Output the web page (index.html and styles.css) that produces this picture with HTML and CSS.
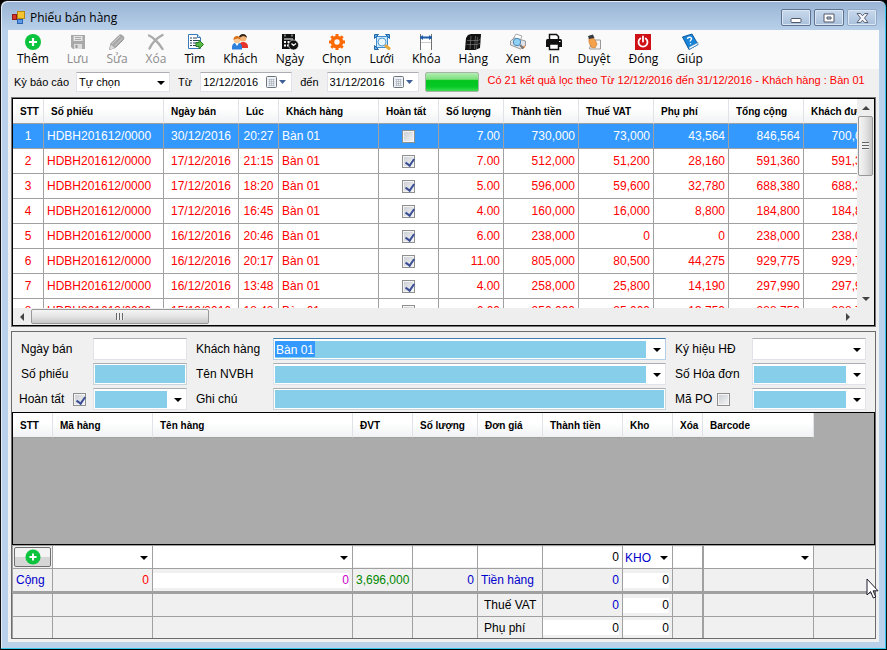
FILE: index.html
```html
<!DOCTYPE html>
<html lang="vi">
<head>
    <meta charset="UTF-8">
    <meta name="viewport" content="width=device-width, initial-scale=1.0">
    <title>Phiếu bán hàng</title>
    <link rel="stylesheet" href="styles.css">
</head>
<body>
<div class="window">
    <!-- Title bar -->
    <header class="titlebar">
        <svg class="app-icon" width="13" height="13" viewBox="0 0 13 13">
            <rect x="5.500" y="0.500" width="7" height="7" fill="#f5c431" stroke="#b8860b"/>
            <rect x="0.500" y="3.500" width="4" height="5" fill="#d9362b" stroke="#8f1d16"/>
            <rect x="5.500" y="8.500" width="5" height="4" fill="#5b9bea" stroke="#2f62ae"/>
        </svg>
        <h1>Phiếu bán hàng</h1>
        <div class="window-buttons">
            <button aria-label="Minimize"><svg width="12" height="12" viewBox="0 0 12 12"><rect x="1" y="6.500" width="10" height="4" rx="1" fill="#fff" stroke="#535666"/></svg></button>
            <button aria-label="Maximize"><svg width="12" height="12" viewBox="0 0 12 12"><path d="M1 2h10v8H1zM4 5v2h4V5z" fill="#fff" fill-rule="evenodd" stroke="#535666"/></svg></button>
            <button class="close" aria-label="Close"><svg width="13" height="12" viewBox="0 0 13 12"><path d="M1 1.500h3.500l2 2.300 2-2.300H12L8.500 6l3.500 4.500H8.500l-2-2.300-2 2.300H1L4.500 6z" fill="#f3f6fa" stroke="#5c6478"/></svg></button>
        </div>
    </header>

    <main class="content">
        <!-- Toolbar -->
        <nav class="toolbar">
            <button>
                <svg viewBox="0 0 18 18"><circle cx="9" cy="9" r="8" fill="#0bc33c"/><path d="M9 5v8M5 9h8" stroke="#fff" stroke-width="2.200"/></svg>
                Thêm
            </button>
            <button disabled>
                <svg viewBox="0 0 18 18"><path d="M2 2h14v14H4l-2-2z" fill="#a9a9a9"/><path d="M4.500 3h9v5h-9z" fill="#e4e4e4"/><path d="M5 11h8v5H5z" fill="#ddd"/><path d="M6 4.500h6M6 6.500h6" stroke="#aaa"/><path d="M6.500 12h2v3h-2z" fill="#999"/></svg>
                Lưu
            </button>
            <button disabled>
                <svg viewBox="0 0 18 18"><path d="M1.500 16.500l1.500-6L11 2.500c2-2 6 1.500 4.500 4L7.500 14.500z" fill="#a8a8a8" stroke="#999"/><path d="M4 11l8-8M6.500 13l8-8" stroke="#ccc"/><path d="M1.500 16.500l1.500-5 3.500 3.500z" fill="#ddd"/></svg>
                Sửa
            </button>
            <button disabled>
                <svg viewBox="0 0 18 18"><path d="M2 2.500C6 4 12 10 15.500 16M15.500 2C10 5 5 10 2.500 15.500" fill="none" stroke="#aaa" stroke-width="2.400" stroke-linecap="round"/></svg>
                Xóa
            </button>
            <button>
                <svg viewBox="0 0 18 18"><path d="M2.500 1.500h9l3 3v11h-12z" fill="#fff" stroke="#3a7ab8"/><path d="M11.500 1.500v3h3" fill="#d6e8f7" stroke="#3a7ab8"/><path d="M4 5h2m1 0h4M4 7.500h2m1 0h6M4 10h2m1 0h3M4 12.500h2m1 0h3" stroke="#29425e"/><path d="M10 9.500h3V7l4.500 4.500L13 16v-2.500h-3z" fill="#58b947" stroke="#277a24"/></svg>
                Tìm
            </button>
            <button>
                <svg viewBox="0 0 18 18"><path d="M8 15c0-4 1-6 4-6s5.500 2 5 6z" fill="#e5352b"/><circle cx="12" cy="5" r="3.500" fill="#f4b577"/><path d="M8 5c-.5-5 8-5.500 8 0-1-1-2-2-4-2z" fill="#33231a"/><path d="M1 16.500c-.5-5 1.500-7 5-7s5.500 2 5 7z" fill="#2c7fda"/><path d="M4 10l2 3 2-3z" fill="#fff"/><circle cx="6" cy="7" r="3.300" fill="#f9c791"/><path d="M2.500 7c-.5-5 7-5.500 7 0C8 5 5 5 2.500 7z" fill="#d8701a"/></svg>
                Khách
            </button>
            <button>
                <svg viewBox="0 0 18 18"><path d="M1 1h13v15H1z" fill="#111"/><path d="M3 5.500h9v1H3zM3 8h2v2H3zM6.500 8h2v2h-2zM3 11.500h2v2H3zM6 11.500h1.500v2H6z" fill="#fff"/><path d="M4 1.500v2M11 1.500v2" stroke="#ddd"/><circle cx="12.500" cy="12" r="5" fill="#111" stroke="#fff" stroke-width=".6"/><path d="M10.500 10.500l2 2 2.500-2" fill="none" stroke="#fff" stroke-width="1.200"/></svg>
                Ngày
            </button>
            <button>
                <svg viewBox="0 0 18 18"><circle cx="9" cy="9" r="4.500" fill="none" stroke="#fb6a05" stroke-width="3.600"/><path d="M9 1v3M9 14v3M1 9h3M14 9h3M3.300 3.300l2 2M12.700 12.700l2 2M14.700 3.300l-2 2M5.300 12.700l-2 2" stroke="#fb6a05" stroke-width="3"/></svg>
                Chọn
            </button>
            <button>
                <svg viewBox="0 0 18 18"><rect x="3.500" y="3.500" width="11" height="11" fill="#cfe8fb" stroke="#3d8bcf"/><path d="M1.500 1.500h4l-4 4zM16.500 1.500h-4l4 4zM1.500 16.500v-4l4 4z" fill="#5ba9e6" stroke="#2868a8"/><circle cx="9" cy="9" r="4" fill="#e7f6ff" stroke="#549ad2"/><path d="M13 13l3 2.500" stroke="#e7a83a" stroke-width="3" stroke-linecap="round"/></svg>
                Lưới
            </button>
            <button>
                <svg viewBox="0 0 18 18"><path d="M4 5h10v12H4z" fill="#fff"/><path d="M3.500 1v16M14.500 1v16" stroke="#707070"/><path d="M3 4.500h12" stroke="#1d5ba8" stroke-width="2"/><path d="M3 4.500l3-2.500v5zM15 4.500L12 2v5z" fill="#1d5ba8"/><path d="M4 9.500h10" stroke="#ccc"/></svg>
                Khóa
            </button>
            <button>
                <svg viewBox="0 0 18 18"><path d="M4 2l3-1h10l-1 14-5 2H1L2 5z" fill="#111"/><path d="M7 3L6 16M11.500 3l-1 13M3 7.500h11l3-1.500M2.500 11.500h11l3-1.500M13.500 4l-1 12" stroke="#888" fill="none" stroke-width=".6"/></svg>
                Hàng
            </button>
            <button>
                <svg viewBox="0 0 18 18"><path d="M4 6l3-5 6 2-2 5z" fill="#fff" stroke="#aaa"/><path d="M1.500 8l4-3 11 3v5l-5 3-10-4z" fill="#dfe3e8" stroke="#999"/><path d="M12 14l4-1.500v2L13 16z" fill="#ef9450"/><circle cx="8" cy="9" r="3.700" fill="#8fd0f5" stroke="#4987b7"/><path d="M11 12l3.500 3.500" stroke="#777" stroke-width="2"/></svg>
                Xem
            </button>
            <button>
                <svg viewBox="0 0 18 18"><path d="M4.500 7V1.500h7l2 2V7" fill="#fff" stroke="#111" stroke-width="1.500"/><path d="M1 7.500Q1 6 2.500 6h13Q17 6 17 7.500V14H1z" fill="#111"/><path d="M4.500 11h9v5.500h-9z" fill="#fff" stroke="#111" stroke-width="1.500"/><path d="M14 8.500h1.500" stroke="#fff"/></svg>
                In
            </button>
            <button>
                <svg viewBox="0 0 18 18"><path d="M7 7h8.500v9H4.500z" fill="#f4f4f4" stroke="#999"/><path d="M4 5c2-2 4-1 6 2l2 4-2 4-4-1-2-5z" fill="#f4a24c" stroke="#cf772a" stroke-width=".7"/><path d="M3 3l5-1.500L9.500 5 4 6z" fill="#353b40"/></svg>
                Duyệt
            </button>
            <button>
                <svg viewBox="0 0 18 18"><rect x="1" y="1" width="16" height="16" fill="#cf1016"/><path d="M6.300 5.500a4.500 4.500 0 1 0 5.400 0M9 3.500v5" fill="none" stroke="#fff" stroke-width="1.800" stroke-linecap="round"/></svg>
                Đóng
            </button>
            <button>
                <svg viewBox="0 0 18 18"><path d="M1.500 4L11 1l6 10.500L8 16.500z" fill="#1784d8" stroke="#0f5ba0"/><path d="M8 16.500l9-5v-2L8 14z" fill="#fff" stroke="#2a75b5" stroke-width=".6"/><path d="M6.500 6c0-2.500 4.500-2.300 4 0-.2 1.200-1.500 1-1.300 2.500M9.500 10.300v1" fill="none" stroke="#fff" stroke-width="1.400"/></svg>
                Giúp
            </button>
        </nav>

        <!-- Report period filter -->
        <div class="filter">
            <label for="period">Kỳ báo cáo</label>
            <span class="combo period"><select id="period"><option>Tự chọn</option></select></span>
            <label class="from" for="date-from">Từ</label>
            <span class="date">
                <input type="text" id="date-from" value="12/12/2016">
                <svg width="22" height="13" viewBox="0 0 22 13"><rect x="0.500" y="0.500" width="10" height="11" rx="1" fill="#eef1f5" stroke="#6d747d"/><path d="M2.500 3.500h6M2.500 5.500h6M2.500 7.500h6M2.500 9.500h6M3.500 3v7M5.500 3v7M7.500 3v7" stroke="#a3abb5" stroke-width=".6"/><path d="M13 4h7l-3.500 4z" fill="#3f5f96"/></svg>
            </span>
            <label class="to" for="date-to">đến</label>
            <span class="date">
                <input type="text" id="date-to" value="31/12/2016">
                <svg width="22" height="13" viewBox="0 0 22 13"><rect x="0.500" y="0.500" width="10" height="11" rx="1" fill="#eef1f5" stroke="#6d747d"/><path d="M2.500 3.500h6M2.500 5.500h6M2.500 7.500h6M2.500 9.500h6M3.500 3v7M5.500 3v7M7.500 3v7" stroke="#a3abb5" stroke-width=".6"/><path d="M13 4h7l-3.500 4z" fill="#3f5f96"/></svg>
            </span>
            <div class="progress" role="progressbar" aria-valuenow="100"></div>
            <p class="message">Có 21 kết quả lọc theo Từ 12/12/2016 đến 31/12/2016 - Khách hàng : Bàn 01</p>
        </div>

        <!-- Invoice list -->
        <section class="list">
            <div class="list-view">
                <table class="grid invoices">
                    <colgroup>
                        <col class="w31"><col class="w120"><col class="w75"><col class="w40"><col class="w100"><col class="w60"><col class="w65"><col class="w75"><col class="w75"><col class="w75"><col class="w75"><col class="w75">
                    </colgroup>
                    <thead>
                        <tr><th>STT</th><th>Số phiếu</th><th>Ngày bán</th><th>Lúc</th><th>Khách hàng</th><th>Hoàn tất</th><th>Số lượng</th><th>Thành tiền</th><th>Thuế VAT</th><th>Phụ phí</th><th>Tổng cộng</th><th>Khách đưa</th></tr>
                    </thead>
                    <tbody>
                        <tr class="selected"><td>1</td><td>HDBH201612/0000</td><td>30/12/2016</td><td>20:27</td><td>Bàn 01</td><td><input type="checkbox" aria-label="Hoàn tất"></td><td>7.00</td><td>730,000</td><td>73,000</td><td>43,564</td><td>846,564</td><td>700,000</td></tr>
                        <tr><td>2</td><td>HDBH201612/0000</td><td>17/12/2016</td><td>21:15</td><td>Bàn 01</td><td><input type="checkbox" aria-label="Hoàn tất" checked></td><td>7.00</td><td>512,000</td><td>51,200</td><td>28,160</td><td>591,360</td><td>591,360</td></tr>
                        <tr><td>3</td><td>HDBH201612/0000</td><td>17/12/2016</td><td>18:20</td><td>Bàn 01</td><td><input type="checkbox" aria-label="Hoàn tất" checked></td><td>5.00</td><td>596,000</td><td>59,600</td><td>32,780</td><td>688,380</td><td>688,380</td></tr>
                        <tr><td>4</td><td>HDBH201612/0000</td><td>17/12/2016</td><td>16:45</td><td>Bàn 01</td><td><input type="checkbox" aria-label="Hoàn tất" checked></td><td>4.00</td><td>160,000</td><td>16,000</td><td>8,800</td><td>184,800</td><td>184,800</td></tr>
                        <tr><td>5</td><td>HDBH201612/0000</td><td>16/12/2016</td><td>20:46</td><td>Bàn 01</td><td><input type="checkbox" aria-label="Hoàn tất" checked></td><td>6.00</td><td>238,000</td><td>0</td><td>0</td><td>238,000</td><td>238,000</td></tr>
                        <tr><td>6</td><td>HDBH201612/0000</td><td>16/12/2016</td><td>20:17</td><td>Bàn 01</td><td><input type="checkbox" aria-label="Hoàn tất" checked></td><td>11.00</td><td>805,000</td><td>80,500</td><td>44,275</td><td>929,775</td><td>929,775</td></tr>
                        <tr><td>7</td><td>HDBH201612/0000</td><td>16/12/2016</td><td>13:48</td><td>Bàn 01</td><td><input type="checkbox" aria-label="Hoàn tất" checked></td><td>4.00</td><td>258,000</td><td>25,800</td><td>14,190</td><td>297,990</td><td>297,990</td></tr>
                        <tr><td>8</td><td>HDBH201612/0000</td><td>15/12/2016</td><td>18:48</td><td>Bàn 01</td><td><input type="checkbox" aria-label="Hoàn tất" checked></td><td>6.00</td><td>250,000</td><td>25,000</td><td>13,750</td><td>288,750</td><td>288,750</td></tr>
                    </tbody>
                </table>
            </div>
            <div class="scroll-v">
                <button aria-label="Up"><svg width="8" height="5" viewBox="0 0 8 5"><path d="M0 5l4-4 4 4z" fill="#444"/></svg></button>
                <div class="thumb"></div>
                <button class="end" aria-label="Down"><svg width="8" height="5" viewBox="0 0 8 5"><path d="M0 0l4 4 4-4z" fill="#444"/></svg></button>
            </div>
            <div class="scroll-h">
                <button aria-label="Left"><svg width="5" height="8" viewBox="0 0 5 8"><path d="M5 0L1 4l4 4z" fill="#444"/></svg></button>
                <div class="thumb"></div>
                <button class="end" aria-label="Right"><svg width="5" height="8" viewBox="0 0 5 8"><path d="M0 0l4 4-4 4z" fill="#444"/></svg></button>
            </div>
        </section>

        <!-- Invoice details -->
        <section class="detail">
            <form class="form">
                <label for="sale-date">Ngày bán</label>
                <input type="text" id="sale-date" class="box">
                <label class="next" for="customer">Khách hàng</label>
                <span class="combo blue focused"><input type="text" id="customer" value="Bàn 01"></span>
                <label class="next" for="symbol">Ký hiệu HĐ</label>
                <span class="combo"><select id="symbol"></select></span>

                <label for="number">Số phiếu</label>
                <input type="text" id="number" class="box blue-box">
                <label class="next" for="seller">Tên NVBH</label>
                <span class="combo blue"><select id="seller"></select></span>
                <label class="next" for="invoice">Số Hóa đơn</label>
                <span class="combo blue"><select id="invoice"></select></span>

                <div class="check"><label for="done">Hoàn tất</label><input type="checkbox" id="done" checked></div>
                <span class="combo blue"><select aria-label="Hoàn tất"></select></span>
                <label class="next" for="note">Ghi chú</label>
                <input type="text" id="note" class="box blue-box">
                <div class="check next"><label for="po">Mã PO</label><input type="checkbox" id="po"></div>
                <span class="combo blue"><select aria-label="Mã PO"></select></span>
            </form>

            <div class="items-view">
                <table class="grid items">
                    <colgroup>
                        <col class="w40"><col class="w100"><col class="w200"><col class="w60"><col class="w65"><col class="w65"><col class="w80"><col class="w50"><col class="w30"><col class="w111">
                    </colgroup>
                    <thead>
                        <tr><th>STT</th><th>Mã hàng</th><th>Tên hàng</th><th>ĐVT</th><th>Số lượng</th><th>Đơn giá</th><th>Thành tiền</th><th>Kho</th><th>Xóa</th><th>Barcode</th></tr>
                    </thead>
                </table>
            </div>

            <!-- New item row and totals -->
            <table class="totals">
                <colgroup>
                    <col class="w40"><col class="w100"><col class="w200"><col class="w60"><col class="w65"><col class="w65"><col class="w80"><col class="w50"><col class="w31"><col class="w110"><col>
                </colgroup>
                <tbody>
                    <tr class="entry">
                        <td><button class="add" aria-label="Thêm"><svg width="16" height="16" viewBox="0 0 18 18"><circle cx="9" cy="9" r="8.500" fill="#0bc33c"/><path d="M9 5v8M5 9h8" stroke="#fff" stroke-width="2.200"/></svg></button></td>
                        <td><span class="combo"><select aria-label="Mã hàng"></select></span></td>
                        <td><span class="combo"><select aria-label="Tên hàng"></select></span></td>
                        <td><input type="text" aria-label="ĐVT"></td>
                        <td><input type="text" aria-label="Số lượng"></td>
                        <td><input type="text" aria-label="Đơn giá"></td>
                        <td><input type="text" aria-label="Thành tiền" value="0"></td>
                        <td><span class="combo store"><select aria-label="Kho"><option>KHO</option></select></span></td>
                        <td><input type="text" aria-label="Xóa"></td>
                        <td><span class="combo"><select aria-label="Barcode"></select></span></td>
                        <td></td>
                    </tr>
                    <tr class="sum">
                        <td class="left navy">Cộng</td>
                        <td class="red">0</td>
                        <td><input type="text" class="magenta" aria-label="Cộng" value="0"></td>
                        <td class="green">3,696,000</td>
                        <td class="navy">0</td>
                        <td class="left navy">Tiền hàng</td>
                        <td class="navy">0</td>
                        <td><input type="text" aria-label="Tiền hàng" value="0"></td>
                        <td></td><td></td><td></td>
                    </tr>
                    <tr>
                        <td></td><td></td><td></td><td></td><td></td>
                        <td class="left indent">Thuế VAT</td>
                        <td class="navy">0</td>
                        <td><input type="text" aria-label="Thuế VAT" value="0"></td>
                        <td></td><td></td><td></td>
                    </tr>
                    <tr>
                        <td></td><td></td><td></td><td></td><td></td>
                        <td class="left indent">Phụ phí</td>
                        <td><input type="text" aria-label="Phụ phí" value="0"></td>
                        <td><input type="text" aria-label="Phụ phí kho" value="0"></td>
                        <td></td><td></td><td></td>
                    </tr>
                </tbody>
            </table>
        </section>
    </main>

    <svg class="cursor" width="13" height="21" viewBox="0 0 13 21"><path d="M1 1v16l3.600-3.400L7.300 20l2.500-1-2.700-6.200H12z" fill="#fff" stroke="#1c1c2c"/></svg>
</div>
</body>
</html>
```

FILE: styles.css
```css
* {
    box-sizing: border-box;
}
body {
    margin: 0;
    background: #000;
    font-family: "Liberation Sans", Arial, sans-serif;
    font-size: 12px;
    color: #000;
}
button, input, select {
    font: inherit;
    color: inherit;
    margin: 0;
    padding: 0;
    border: 0;
    border-radius: 0;
    background: none;
}
table {
    border-collapse: separate;
    border-spacing: 0;
    table-layout: fixed;
}

/* Window frame */
.window {
    position: relative;
    display: flex;
    flex-direction: column;
    min-height: 100vh;
    padding: 0 7px 7px;
    border: 1px solid #111;
    border-bottom-color: #000;
    border-radius: 7px 7px 0 0;
    background: linear-gradient(#98b3d4, #b9d1ea 30px, #b9d1ea);
    box-shadow: inset -1px -1px 0 #35c5ea, inset 1px 1px 0 #e4eefa;
}
.titlebar {
    display: flex;
    align-items: center;
    height: 29px;
    padding: 4px 2px 0 4px;
}
.titlebar h1 {
    flex: 1;
    margin: 0 0 0 5px;
    font-family: "Open Sans", sans-serif;
    font-size: 12px;
    font-weight: 400;
}
.window-buttons {
    display: flex;
    gap: 3px;
}
.window-buttons button {
    display: flex;
    align-items: center;
    justify-content: center;
    width: 30px;
    height: 17px;
    border: 1px solid #5f7391;
    border-radius: 2px;
    background: linear-gradient(#c8d9ed, #a9c0db);
    box-shadow: inset 0 0 0 1px #dbe7f4;
}
.window-buttons .close {
    border-color: #92a9c6;
}
.content {
    flex: 1;
    display: flex;
    flex-direction: column;
    padding: 0 3px 3px;
    background: #f0f0f0;
}

/* Toolbar */
.toolbar {
    display: flex;
    gap: 18px;
    height: 39px;
    margin: 0 -3px;
    padding: 3px 9px 0;
    background: #fafafa;
}
.toolbar button {
    display: flex;
    flex-direction: column;
    align-items: center;
    font-family: "Open Sans", sans-serif;
    font-size: 12px;
    line-height: 16px;
}
.toolbar svg {
    width: 18px;
    height: 18px;
    margin: 0 -6px;
}
.toolbar button:disabled {
    color: #8d8d8d;
}

/* Filter row */
.filter {
    display: flex;
    align-items: center;
    height: 28px;
    padding: 0 3px 2px;
    font-size: 11px;
}
.period {
    width: 94px;
    margin-left: 7px;
}
.from, .to {
    margin: 0 8px;
}
.date {
    display: flex;
    align-items: center;
    width: 92px;
    height: 20px;
    padding: 0 3px 0 2px;
    border: 1px solid #e2e3ea;
    border-top-color: #abadb3;
    background: #fff;
}
.date input {
    flex: 1;
    width: 0;
}
.progress {
    width: 54px;
    height: 20px;
    margin: 0 9px 0 6px;
    border: 1px solid #a5b5a5;
    border-radius: 2px;
    background: linear-gradient(#b5edb5, #7ce07c 35%, #04c51f 42%, #05c926 75%, #3ddc50);
}
.message {
    margin: 0 0 5px;
    color: #f00;
    white-space: nowrap;
}

/* Text boxes and drop-downs */
.box, .combo {
    height: 22px;
    border: 1px solid #e2e3ea;
    border-top-color: #abadb3;
    background: #fff;
}
.blue-box {
    background: #87ceeb;
    border-color: #c9d5dd;
    border-top-color: #abadb3;
    box-shadow: inset 0 0 0 1px #fff;
}
.combo {
    position: relative;
    display: flex;
}
.combo::after {
    content: "";
    position: absolute;
    right: 4px;
    top: 50%;
    margin-top: -1px;
    border: 4px solid transparent;
    border-top-color: #000;
    border-bottom: 0;
    pointer-events: none;
}
.combo select, .combo input {
    appearance: none;
    flex: 1;
    width: 0;
    margin: 2px 19px 1px 1px;
}
.combo select {
    padding-left: 1px;
}
.blue select, .blue input {
    background: #87ceeb;
}
.focused {
    border-color: #b5cfe7;
    border-top-color: #3d7bad;
}
.focused input {
    padding-left: 1px;
    color: #fff;
    background: linear-gradient(#39f, #39f) 0 0 / 40px 16px no-repeat #87ceeb;
}
.filter .combo {
    height: 20px;
}
.filter select {
    margin: 0 19px 1px 1px;
}

input[type="checkbox"] {
    appearance: none;
    position: relative;
    flex: none;
    width: 13px;
    height: 13px;
    border: 1px solid #8e8f8f;
    background: linear-gradient(135deg, #c8ccd2, #f6f6f6);
    box-shadow: inset 0 0 0 1px #f4f4f4;
}
input[type="checkbox"]:checked::after {
    content: "";
    position: absolute;
    left: 4px;
    top: 1px;
    width: 4px;
    height: 7px;
    border: solid #3b4f96;
    border-width: 0 2px 2px 0;
    transform: rotate(35deg);
}

/* Data grids */
.w30 { width: 30px; }
.w31 { width: 31px; }
.w40 { width: 40px; }
.w50 { width: 50px; }
.w60 { width: 60px; }
.w65 { width: 65px; }
.w75 { width: 75px; }
.w80 { width: 80px; }
.w100 { width: 100px; }
.w110 { width: 110px; }
.w111 { width: 111px; }
.w120 { width: 120px; }
.w200 { width: 200px; }

.grid th {
    height: 25px;
    padding: 0 0 0 7px;
    border-right: 1px solid #dfe2e6;
    border-bottom: 1px solid #a0a0a0;
    background: linear-gradient(#fff 40%, #f1f2f4);
    font-size: 10px;
    text-align: left;
    white-space: nowrap;
    overflow: hidden;
}
.invoices {
    width: 866px;
}
.items {
    width: 801px;
}
.grid td {
    height: 25px;
    padding: 0 3px;
    border-right: 1px solid #a0a0a0;
    border-bottom: 1px solid #a0a0a0;
    color: #f00;
    text-align: right;
    white-space: nowrap;
    overflow: hidden;
}
.grid td:nth-child(1), .grid td:nth-child(3), .grid td:nth-child(4), .grid td:nth-child(6) {
    padding: 0;
    text-align: center;
}
.grid td:nth-child(2), .grid td:nth-child(5) {
    text-align: left;
}
.grid td input {
    display: block;
    margin: 0 auto;
}
.selected td {
    background: #39f;
}
.grid .selected td {
    color: #fff;
}

/* Invoice list with its scrollbars */
.list {
    display: grid;
    grid-template-columns: minmax(0, 1fr) 17px;
    grid-template-rows: minmax(0, 1fr) 17px;
    height: 230px;
    border: 1px solid #777;
    box-shadow: inset 0 0 0 1px #000;
    padding: 1px;
}
.list-view {
    overflow: hidden;
    background: #fff;
}
.scroll-v, .scroll-h {
    display: flex;
    background: #eee;
}
.scroll-v {
    flex-direction: column;
}
.scroll-h {
    grid-column: 1 / -1;
    padding-right: 17px;
}
.scroll-v button, .scroll-h button {
    display: flex;
    align-items: center;
    justify-content: center;
    width: 17px;
    height: 17px;
}
.scroll-v .end {
    margin-top: auto;
}
.scroll-h .end {
    margin-left: auto;
}
.thumb {
    display: flex;
    align-items: center;
    justify-content: center;
    border: 1px solid #989898;
    border-radius: 2px;
}
.thumb::after {
    content: "";
}
.scroll-v .thumb {
    height: 60px;
    margin: 0 1px;
    background: linear-gradient(90deg, #f5f5f5, #e4e4e4 50%, #c8c8c8);
}
.scroll-v .thumb::after {
    width: 7px;
    height: 8px;
    background: repeating-linear-gradient(#666 0 1px, #eee 1px 3px);
}
.scroll-h .thumb {
    width: 178px;
    height: 15px;
    margin: 1px;
    background: linear-gradient(#f5f5f5, #e4e4e4 50%, #c8c8c8);
}
.scroll-h .thumb::after {
    width: 8px;
    height: 7px;
    background: repeating-linear-gradient(90deg, #666 0 1px, #eee 1px 3px);
}

/* Detail panel */
.detail {
    flex: 1;
    display: flex;
    flex-direction: column;
    margin-top: 4px;
    border: 1px solid #6b6b6b;
}
.form {
    display: grid;
    grid-template-columns: 72px 94px 86px minmax(0, 1fr) 86px 114px;
    grid-auto-rows: 22px;
    row-gap: 3px;
    align-items: center;
    padding: 6px 9px 2px;
}
.next {
    padding-left: 9px;
}
.check {
    display: flex;
    align-items: center;
    justify-content: space-between;
    margin-left: -2px;
    padding-right: 7px;
}
.check.next {
    margin: 0;
    padding-right: 22px;
}
.items-view {
    flex: 1;
    border: 1px solid #000;
    background: #ababab;
    overflow: hidden;
}

/* Totals */
.totals {
    width: 100%;
    border-top: 1px solid #a0a0a0;
    border-left: 1px solid #a0a0a0;
}
.totals td {
    height: 23px;
    padding: 0 3px;
    border-right: 1px solid #a0a0a0;
    border-bottom: 1px solid #a0a0a0;
    text-align: right;
    white-space: nowrap;
}
.totals td:nth-child(3), .totals td:nth-child(7), .totals td:nth-child(8) {
    padding: 0 3px 0 0;
}
.totals td:nth-child(9) {
    border-right-width: 2px;
}
.totals td:last-child {
    border-right: 0;
}
.totals tr.entry td {
    padding: 0;
}
.totals tr.sum td {
    height: 25px;
    border-bottom-width: 3px;
}
.totals tr:last-child td {
    height: 21px;
    border-bottom: 0;
}
.totals input {
    display: block;
    width: 100%;
    height: 15px;
    background: #fff;
    text-align: right;
}
.totals .entry input {
    height: 20px;
    padding-right: 3px;
}
.totals .combo {
    height: 22px;
    border: 0;
}
.store {
    color: #00c;
}
.totals .left {
    text-align: left;
}
.totals .indent {
    padding-left: 6px;
}
.add {
    display: flex;
    align-items: center;
    justify-content: center;
    width: 37px;
    height: 20px;
    margin: 0 auto;
    border: 1px solid #707070;
    border-radius: 2px;
    background: linear-gradient(#f3f3f3 50%, #d6d6d6 50%);
}
.navy { color: #00c; }
.red { color: #f00; }
.green { color: #080; }
.magenta { color: #c0c; }

.cursor {
    position: absolute;
    right: 7px;
    bottom: 50px;
}
```
